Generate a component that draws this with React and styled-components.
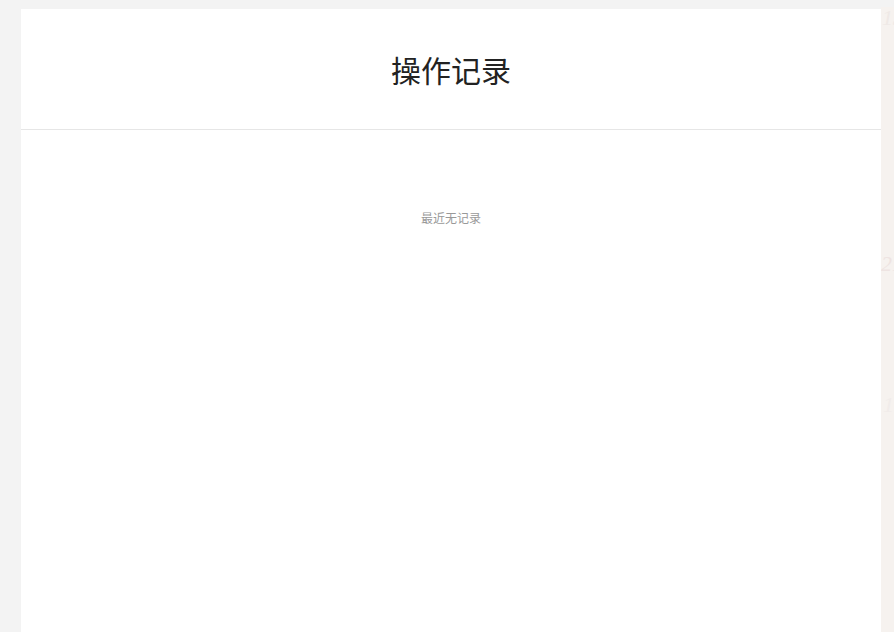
import React from "react";
import styled, { createGlobalStyle } from "styled-components";

const Global = createGlobalStyle`
  html, body { margin: 0; padding: 0; background: #f3f3f3; height: 100%; }
  body { font-family: "Noto Sans CJK SC", "Noto Sans", sans-serif; overflow: hidden; }
  #root { height: 100%; }
`;

const Page = styled.div`
  display: flex;
  height: 632px;
  padding: 9px 0 0 21px;
  box-sizing: border-box;
  position: relative;
`;

const Card = styled.main`
  width: 860px;
  background: #fff;
  display: flex;
  flex-direction: column;
`;

const Header = styled.header`
  height: 120px;
  border-bottom: 1px solid #e6e6e6;
  display: flex;
  align-items: center;
  justify-content: center;
`;

const Title = styled.h1`
  margin: 0;
  font-size: 30px;
  font-weight: 400;
  color: #222;
  line-height: 1;
`;

const Empty = styled.p`
  margin: 80px 0 0;
  text-align: center;
  font-size: 12px;
  color: #999;
  line-height: 16px;
`;

const Side = styled.aside`
  flex: 1;
  margin-top: -2px;
  background: #f6f2ef;
  position: relative;
  overflow: hidden;
`;

const Mark = styled.span`
  position: absolute;
  left: ${(p) => p.$x}px;
  top: ${(p) => p.$y}px;
  font-family: "Liberation Serif", serif;
  font-style: italic;
  font-size: 22px;
  color: ${(p) => p.$c};
  white-space: nowrap;
`;

export default function App() {
  return (
    <>
      <Global />
      <Page>
        <Card>
          <Header>
            <Title>操作记录</Title>
          </Header>
          <Empty>最近无记录</Empty>
        </Card>
        <Side aria-hidden="true">
          <Mark $x={1} $y={-2} $c="#efe9e6">13</Mark>
          <Mark $x={0} $y={244} $c="#eee4e2">21</Mark>
          <Mark $x={2} $y={385} $c="#f1ecea">1</Mark>
        </Side>
      </Page>
    </>
  );
}
